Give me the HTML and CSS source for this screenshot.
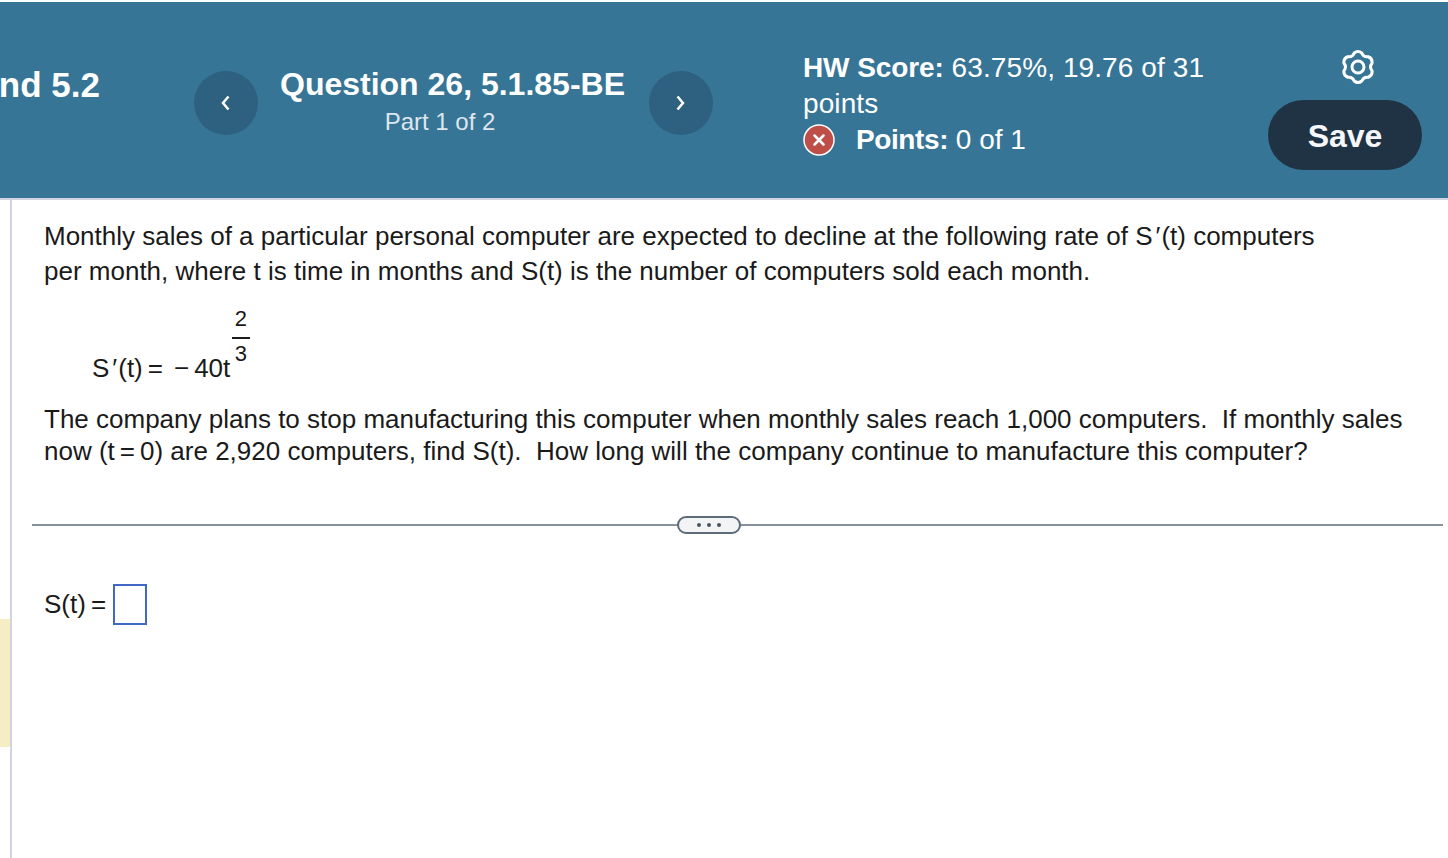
FILE: index.html
```html
<!DOCTYPE html>
<html lang="en">
<head>
<meta charset="UTF-8" />
<meta name="viewport" content="width=device-width, initial-scale=1" />
<title>Question 26, 5.1.85-BE</title>
<link rel="stylesheet" href="styles.css">
</head>
<body>
<header class="topbar">
    <div class="hw-title">nd 5.2</div>
    <button class="nav-btn nav-prev" aria-label="Previous question">
        <svg width="12" height="18" viewBox="0 0 12 18"><path d="M8.500 2.500 3 9l5.500 6.500" /></svg>
    </button>
    <div class="question-info">
        <div class="question-name">Question 26, 5.1.85-BE</div>
        <div class="question-part">Part 1 of 2</div>
    </div>
    <button class="nav-btn nav-next" aria-label="Next question">
        <svg width="12" height="18" viewBox="0 0 12 18"><path d="M2.500 2.500 8 9l-5.500 6.500" /></svg>
    </button>
    <div class="score">
        <div class="score-line"><b>HW Score:</b> 63.75%, 19.76 of 31 points</div>
        <div class="points-line">
            <svg class="x-icon" width="32" height="32" viewBox="0 0 32 32">
                <circle cx="16" cy="16" r="15" fill="#bd4f48" stroke="#fff" stroke-width="1.500" />
                <path d="M11.500 11.500l9 9M20.500 11.500l-9 9" fill="none" stroke="#fff" stroke-width="2.500" stroke-linecap="round" />
            </svg>
            <span><b>Points:</b> 0 of 1</span>
        </div>
    </div>
    <div class="actions">
        <svg class="gear" width="36" height="36" viewBox="0 0 36 36" aria-label="Settings">
            <path d="M14.250 3.990Q18 1 21.750 3.990Q23.500 8.470 28.250 7.750Q32.720 9.500 32.010 14.250Q29 18 32.010 21.750Q32.720 26.500 28.250 28.250Q23.500 27.530 21.750 32.010Q18 35 14.250 32.010Q12.500 27.530 7.750 28.250Q3.280 26.500 3.990 21.750Q7 18 3.990 14.250Q3.280 9.500 7.750 7.750Q12.500 8.470 14.250 3.990Z" />
            <circle cx="18" cy="18" r="6" />
        </svg>
        <button class="save-btn">Save</button>
    </div>
</header>
<div class="page">
    <aside class="sidebar"><div class="sidebar-mark"></div></aside>
    <main class="content">
        <p class="para para-first">Monthly sales of a particular personal computer are expected to decline at the following rate of S<span class="prime">&prime;</span>(t) computers<br>per month, where t is time in months and S(t) is the number of computers sold each month.</p>
        <div class="math">
            <span>S<span class="prime">&prime;</span>(t)<span class="eq">=</span><span class="minus">&minus;</span><span class="coef">40t</span></span>
            <span class="exponent">
                <span class="exp-num">2</span>
                <span class="exp-den">3</span>
            </span>
        </div>
        <p class="para para-second">The company plans to stop manufacturing this computer when monthly sales reach 1,000 computers.&nbsp; If monthly sales<br>now (t<span class="eq">=</span>0) are 2,920 computers, find S(t).&nbsp; How long will the company continue to manufacture this computer?</p>
        <div class="divider">
            <span class="more-pill"><i></i><i></i><i></i></span>
        </div>
        <div class="answer">
            <span>S(t)<span class="eq">=</span></span>
            <span class="answer-box"></span>
        </div>
    </main>
</div>
</body>
</html>
```

FILE: styles.css
```css
* {
    box-sizing: border-box;
}
body {
    margin: 0;
    height: 858px;
    overflow: hidden;
    font-family: "Liberation Sans", Arial, sans-serif;
    background-color: #fff;
    color: #1a1a1a;
    font-size: 26px;
}
.topbar {
    margin-top: 2px;
    height: 198px;
    border-bottom: 2px solid #cfd4e0;
    background-color: #367596;
    color: #fff;
    display: flex;
    align-items: flex-start;
}
.hw-title {
    width: 100px;
    margin-top: 63px;
    margin-right: 94px;
    display: flex;
    justify-content: flex-end;
    white-space: nowrap;
    font-size: 35px;
    font-weight: 700;
}
.nav-btn {
    width: 64px;
    height: 64px;
    margin-top: 69px;
    flex: none;
    border: none;
    border-radius: 50%;
    background-color: #2e607f;
    display: flex;
    align-items: center;
    justify-content: center;
    padding: 0;
}
.nav-btn path {
    fill: none;
    stroke: #fff;
    stroke-width: 2.500;
}
.question-info {
    width: 391px;
    margin-top: 64px;
    padding-right: 2px;
    text-align: center;
}
.question-name {
    font-size: 32px;
    font-weight: 700;
}
.question-part {
    margin-top: 5px;
    padding-right: 25px;
    font-size: 24px;
    color: #dfe6ee;
}
.score {
    width: 420px;
    margin-left: 90px;
    margin-top: 48px;
    font-size: 28px;
    line-height: 36px;
}
.score-line {
    letter-spacing: .1px;
}
.score-line b {
    letter-spacing: -.1px;
}
.points-line b {
    letter-spacing: -.4px;
}
.points-line {
    display: flex;
    align-items: center;
    gap: 21px;
}
.actions {
    margin-left: 45px;
    width: 154px;
    margin-top: 47px;
    display: flex;
    flex-direction: column;
    align-items: center;
}
.gear {
    margin-left: 26px;
}
.gear path,
.gear circle {
    fill: none;
    stroke: #fff;
    stroke-width: 3;
}
.save-btn {
    margin-top: 15px;
    width: 154px;
    height: 70px;
    border: none;
    border-radius: 35px;
    background-color: #203345;
    color: #f5f7fb;
    font-family: inherit;
    font-size: 32px;
    font-weight: 700;
    padding: 2px 0 0;
}
.page {
    display: flex;
    height: 658px;
}
.sidebar {
    width: 12px;
    flex: none;
    border-right: 2px solid #cfd4e0;
}
.sidebar-mark {
    margin-top: 419px;
    height: 128px;
    background-color: #f7edc5;
}
.content {
    flex: 1;
    padding: 19px 5px 0 20px;
}
.para {
    margin: 0 0 0 12px;
    white-space: nowrap;
}
.para-first {
    line-height: 35px;
}
.para-second {
    line-height: 32px;
}
.prime {
    margin: 0 1px 0 3px;
}
.eq {
    margin: 0 5px;
}
.minus {
    margin-left: 6px;
}
.coef {
    margin-left: 5px;
}
.math {
    margin: 18px 0 19px 60px;
    display: flex;
    align-items: flex-end;
    line-height: 32px;
}
.exponent {
    display: flex;
    flex-direction: column;
    align-items: center;
    font-size: 22px;
    line-height: 24px;
    margin-bottom: 18px;
    margin-left: 2px;
}
.exp-num {
    padding: 0 2.500px 6px;
    border-bottom: 2px solid #1a1a1a;
}
.exp-den {
    margin-top: 3px;
}
.divider {
    margin-top: 57px;
    height: 2px;
    background-color: #87919e;
    display: flex;
    justify-content: center;
    align-items: center;
    padding-right: 57px;
}
.more-pill {
    width: 64px;
    height: 18px;
    flex: none;
    border: 2px solid #5d6b7b;
    border-radius: 9px;
    background-color: #f3f4f6;
    display: flex;
    align-items: center;
    justify-content: center;
    gap: 6px;
}
.more-pill i {
    width: 4px;
    height: 4px;
    border-radius: 50%;
    background-color: #4a5562;
}
.answer {
    margin: 58px 0 0 12px;
    display: flex;
    align-items: center;
    gap: 2px;
}
.answer-box {
    width: 34px;
    height: 41px;
    border: 2px solid #3f69c4;
}
```
